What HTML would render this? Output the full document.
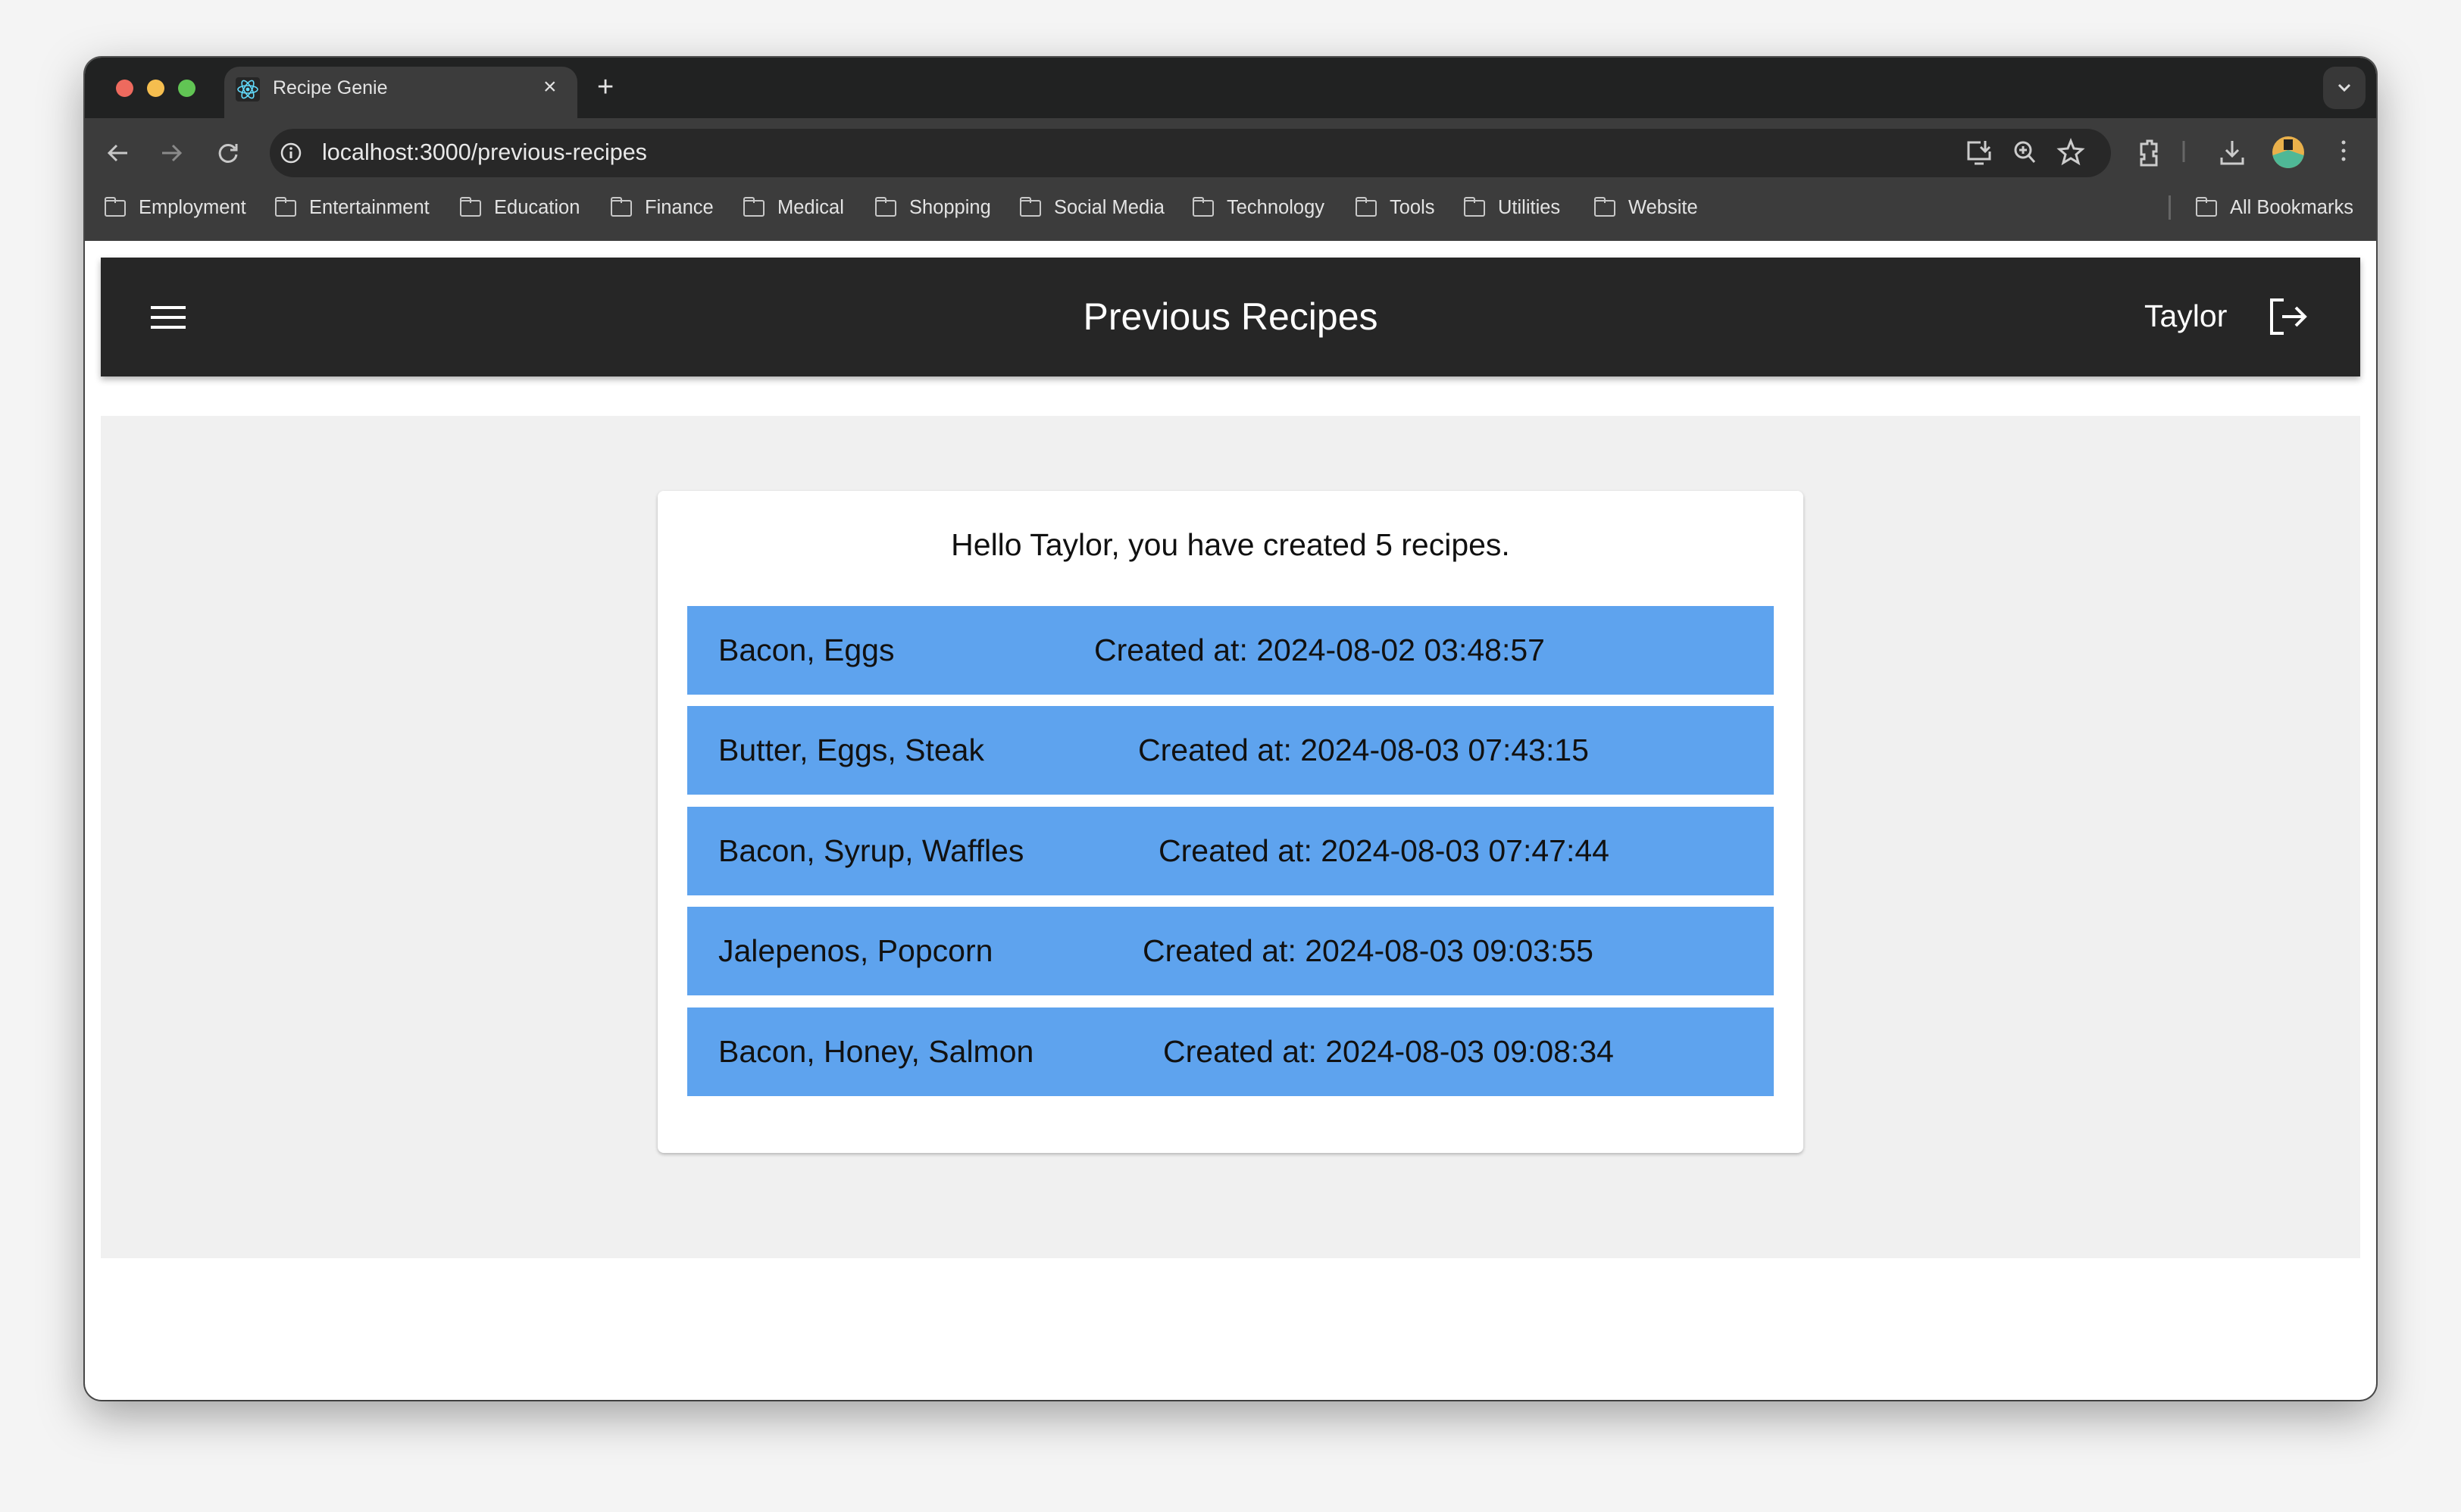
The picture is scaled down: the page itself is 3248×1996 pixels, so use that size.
<!DOCTYPE html>
<html><head><meta charset="utf-8"><style>
*{margin:0;padding:0;box-sizing:border-box}
body{width:3248px;height:1996px;background:#f4f4f4;font-family:"Liberation Sans",Helvetica,Arial,sans-serif;position:relative;overflow:hidden}
.win{position:absolute;left:112px;top:76px;width:3024px;height:1772px;border-radius:22px;background:#fff;overflow:hidden;box-shadow:0 20px 60px rgba(0,0,0,.35),0 0 0 2px #555}
.abs{position:absolute}
.tabbar{left:0;top:0;width:100%;height:80px;background:#212222}
.toolbar{left:0;top:80px;width:100%;height:162px;background:#3c3c3c}
.dot{width:23px;height:23px;border-radius:50%;top:29px}
.tab{left:184px;top:12px;width:466px;height:70px;background:#3c3c3c;border-radius:20px 20px 0 0}
.t{color:#e3e3e3;font-size:25px}
.url{left:244px;top:94px;width:2430px;height:64px;border-radius:32px;background:#282828}
.bm{top:184px;color:#e3e3e3;font-size:25.5px;white-space:nowrap}
.fold{display:inline-block;width:28px;height:22px;border:2.5px solid #c8c8c8;border-radius:3px;vertical-align:-4px;margin-right:17px;position:relative}
.fold:before{content:"";position:absolute;left:-2.5px;top:-6px;width:11px;height:6px;border:2.5px solid #c8c8c8;border-bottom:none;border-radius:3px 3px 0 0}
.hdr{left:21px;top:264px;width:2982px;height:157px;background:#262626;box-shadow:0 4px 8px rgba(0,0,0,.3)}
.gray{left:21px;top:473px;width:2982px;height:1112px;background:#f0f0f0}
.card{left:756px;top:572px;width:1512px;height:874px;background:#fff;border-radius:8px;box-shadow:0 2px 4px rgba(0,0,0,.25)}
.row{position:absolute;left:39px;width:1434px;height:117px;background:#5ea3ee;font-size:41px;color:#111}
.row span{position:absolute;top:0;line-height:117px}
</style></head><body>
<div class="win">
<div class="abs tabbar"></div>
<div class="abs toolbar"></div>
<div class="abs dot" style="left:41px;background:#ee6a5e"></div>
<div class="abs dot" style="left:82px;background:#f5be4f"></div>
<div class="abs dot" style="left:123px;background:#61c554"></div>
<div class="abs tab"></div>
<svg class="abs" style="left:199px;top:26px" width="32" height="32" viewBox="0 0 32 32"><rect width="32" height="32" rx="4" fill="#262626"/><g fill="none" stroke="#61dafb" stroke-width="1.6"><ellipse cx="16" cy="16" rx="13" ry="5"/><ellipse cx="16" cy="16" rx="13" ry="5" transform="rotate(60 16 16)"/><ellipse cx="16" cy="16" rx="13" ry="5" transform="rotate(120 16 16)"/></g><circle cx="16" cy="16" r="2.4" fill="#61dafb"/></svg>
<div class="abs t" style="left:248px;top:26px">Recipe Genie</div>
<div class="abs t" style="left:605px;top:22px;font-size:30px">×</div>
<div class="abs t" style="left:676px;top:18px;font-size:38px;font-weight:300">+</div>
<div class="abs" style="left:2954px;top:12px;width:56px;height:56px;border-radius:16px;background:#383838"></div>
<svg class="abs" style="left:2970px;top:30px" width="24" height="20"><path d="M5 6l7 7 7-7" stroke="#ddd" stroke-width="3" fill="none"/></svg>
<svg class="abs" style="left:26px;top:108px" width="300" height="36" viewBox="0 0 300 36"><g stroke="#c8c8c8" stroke-width="3" fill="none"><path d="M30 18H6M16 8 6 18l10 10"/></g><g stroke="#8a8a8a" stroke-width="3" fill="none"><path d="M76 18h24M90 8l10 10-10 10"/></g><g stroke="#c8c8c8" stroke-width="3" fill="none"><path d="M172 12a11 11 0 1 0 2 8"/><path d="M174 6v8h-8"/></g></svg>
<div class="abs url"></div>
<svg class="abs" style="left:256px;top:110px" width="32" height="32"><circle cx="16" cy="16" r="12" stroke="#ddd" stroke-width="2.5" fill="none"/><path d="M16 14v9" stroke="#ddd" stroke-width="3"/><circle cx="16" cy="10" r="1.8" fill="#ddd"/></svg>
<div class="abs" style="left:313px;top:108px;color:#e8e8e8;font-size:30.5px">localhost:3000/previous-recipes</div>
<svg class="abs" style="left:2480px;top:104px" width="580" height="46" viewBox="0 0 580 46"><g stroke="#ccc" stroke-width="3" fill="none">
<path d="M22 8H6v22h28V20M14 36h12M28 6v14M22 14l6 6 6-6"/>
<circle cx="78" cy="18" r="10"/><path d="M85 25l8 9M78 13v10M73 18h10"/>
<path d="M141 6l4 10 11 1-8 7 3 11-10-6-10 6 3-11-8-7 11-1z"/>
<path d="M234 10h8v-4h6v4h6v10h-4v6h4v12h-20v-8h4v-6h-4z"/>
<path d="M290 6v28" stroke="#666"/>
<path d="M354 6v20M346 18l8 8 8-8M340 28v8h28v-8"/>
<circle cx="501" cy="8" r="2.5" fill="#ccc" stroke="none"/><circle cx="501" cy="19" r="2.5" fill="#ccc" stroke="none"/><circle cx="501" cy="30" r="2.5" fill="#ccc" stroke="none"/>
</g><clipPath id="c"><circle cx="428" cy="21" r="21"/></clipPath><g clip-path="url(#c)"><rect x="405" y="0" width="46" height="46" fill="#e9b04b"/><path d="M405 26l23-8 23 8v20h-46z" fill="#4fb896"/><rect x="422" y="4" width="12" height="14" fill="#222"/></g></svg>
<div class="abs bm" style="left:26px"><span class="fold"></span>Employment</div>
<div class="abs bm" style="left:251px"><span class="fold"></span>Entertainment</div>
<div class="abs bm" style="left:495px"><span class="fold"></span>Education</div>
<div class="abs bm" style="left:694px"><span class="fold"></span>Finance</div>
<div class="abs bm" style="left:869px"><span class="fold"></span>Medical</div>
<div class="abs bm" style="left:1043px"><span class="fold"></span>Shopping</div>
<div class="abs bm" style="left:1234px"><span class="fold"></span>Social Media</div>
<div class="abs bm" style="left:1462px"><span class="fold"></span>Technology</div>
<div class="abs bm" style="left:1677px"><span class="fold"></span>Tools</div>
<div class="abs bm" style="left:1820px"><span class="fold"></span>Utilities</div>
<div class="abs bm" style="left:1992px"><span class="fold"></span>Website</div>
<div class="abs" style="left:2750px;top:182px;width:3px;height:32px;background:#666"></div>
<div class="abs bm" style="left:2786px"><span class="fold"></span>All Bookmarks</div>

<div class="abs hdr"></div>
<svg class="abs" style="left:87px;top:326px" width="48" height="36"><g stroke="#fff" stroke-width="4"><path d="M0 4h46M0 17h46M0 30h46"/></g></svg>
<div class="abs" style="left:0;width:3024px;top:312px;height:60px;line-height:60px;text-align:center;color:#fff;font-size:50px">Previous Recipes</div>
<div class="abs" style="left:2718px;top:316px;height:50px;line-height:50px;color:#fff;font-size:41px">Taylor</div>
<svg class="abs" style="left:2880px;top:314px" width="56" height="56" viewBox="0 0 56 56"><g stroke="#fff" stroke-width="4" fill="none"><path d="M22 6H6v44h16M20 28h30M38 16l12 12-12 12"/></g></svg>

<div class="abs gray"></div>
<div class="abs card">
<div class="abs" style="left:0;width:1512px;top:46px;height:50px;line-height:50px;text-align:center;font-size:41px;color:#111">Hello Taylor, you have created 5 recipes.</div>
<div class="row" style="top:152px"><span style="left:41px">Bacon, Eggs</span><span style="left:537px">Created at: 2024-08-02 03:48:57</span></div>
<div class="row" style="top:284px"><span style="left:41px">Butter, Eggs, Steak</span><span style="left:595px">Created at: 2024-08-03 07:43:15</span></div>
<div class="row" style="top:417px"><span style="left:41px">Bacon, Syrup, Waffles</span><span style="left:622px">Created at: 2024-08-03 07:47:44</span></div>
<div class="row" style="top:549px"><span style="left:41px">Jalepenos, Popcorn</span><span style="left:601px">Created at: 2024-08-03 09:03:55</span></div>
<div class="row" style="top:682px"><span style="left:41px">Bacon, Honey, Salmon</span><span style="left:628px">Created at: 2024-08-03 09:08:34</span></div>
</div>
</div>
</body></html>
